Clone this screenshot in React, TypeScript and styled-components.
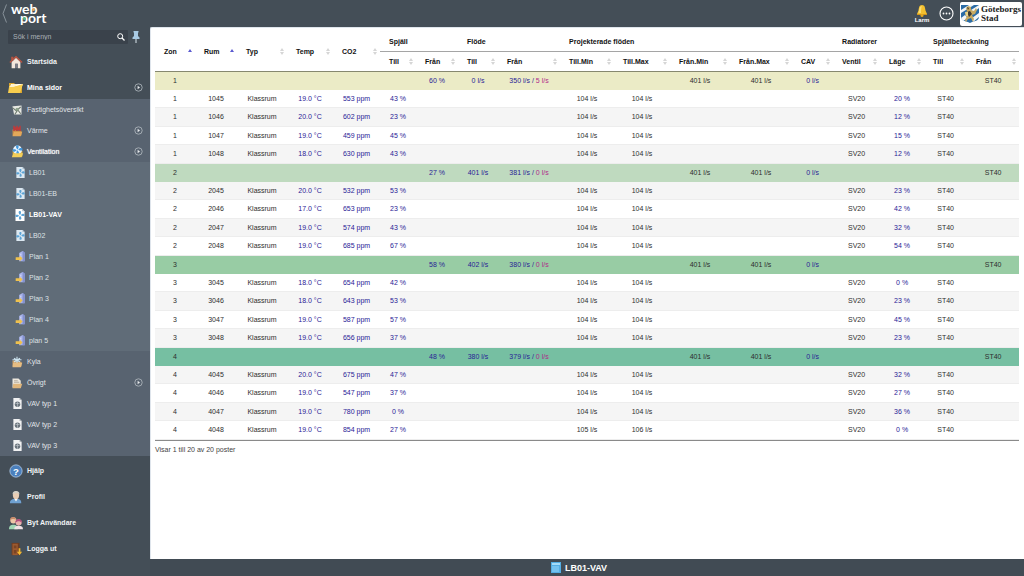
import React from 'react';
import styled, { createGlobalStyle, css } from 'styled-components';

const GlobalStyle = createGlobalStyle`
  *, *::before, *::after { box-sizing: border-box; }
  body {
    margin: 0;
    background: #444e57;
    font: 7px/10px "Liberation Sans", Arial, sans-serif;
    color: #333;
  }
  button { font: inherit; color: inherit; border: 0; background: none; padding: 0; cursor: pointer; }
  a { color: inherit; text-decoration: none; }
  svg { display: block; flex: none; }
`;

/* ---------- Layout ---------- */

const Page = styled.div`
  display: flex;
  min-height: 100vh;
`;

const Sidebar = styled.aside`
  flex: 0 0 150px;
  background: #444e57;
  color: #eef1f3;
`;

const Content = styled.div`
  flex: 1;
  min-width: 0;
  display: flex;
  flex-direction: column;
`;

const TopBar = styled.header`
  height: 27px;
  display: flex;
  align-items: center;
  justify-content: flex-end;
  gap: 8px;
  padding-right: 2px;
  color: #fff;
`;

const Main = styled.main`
  flex: 1;
  background: #fff;
  border: 1px solid #dfe5ec;
  border-width: 1px 0 0 1px;
  border-top-left-radius: 2px;
  padding: 4px 5px 4px 4px;
`;

const StatusBar = styled.footer`
  height: 17px;
  display: flex;
  align-items: center;
  justify-content: center;
  gap: 4px;
  padding-right: 16px;
  background: #414b54;
  color: #fff;
  font-size: 9px;
  font-weight: bold;
`;

/* ---------- Sidebar ---------- */

const Brand = styled.div`
  height: 30px;
  display: flex;
  gap: 4px;
  padding: 4px 0 0 2px;
`;

const BackButton = styled.button`
  align-self: flex-start;
`;

const BrandName = styled.a`
  display: flex;
  flex-direction: column;
  font: 700 14px/9px Lato, sans-serif;
  color: #fff;
`;

const BrandLine = styled.span<{ $indent?: boolean }>`
  position: relative;
  margin-left: ${(p) => (p.$indent ? 9 : 0)}px;
`;

const BrandDot = styled.span<{ $color: string; $left: number }>`
  position: absolute;
  top: 4px;
  left: ${(p) => p.$left}px;
  width: 3px;
  height: 3px;
  border-radius: 50%;
  background: ${(p) => p.$color};
`;

const SearchRow = styled.form`
  display: flex;
  align-items: center;
  gap: 4px;
  padding: 0 8px;
`;

const SearchBox = styled.div`
  flex: 0 0 120px;
  height: 14px;
  display: flex;
  align-items: center;
  padding: 0 3px 0 5px;
  background: #3a424b;
  border-radius: 1px;
`;

const SearchInput = styled.input`
  flex: 1;
  min-width: 0;
  padding: 0;
  border: 0;
  outline: 0;
  background: none;
  font: inherit;
  color: #fff;
  &::placeholder { color: #a9b0b6; opacity: 1; }
`;

const Nav = styled.nav`
  display: flex;
  flex-direction: column;
  gap: 3px;
  padding-top: 6px;
`;

const SubGroup = styled.div`
  background: #586370;
  margin-top: -3px;
`;

const DeepGroup = styled.div`
  background: #606c78;
`;

type Level = 1 | 2 | 3;

const levels = {
  1: css`height: 23px; padding-left: 8px; gap: 3px; font-weight: bold; color: #f1f3f5;`,
  2: css`height: 21px; padding-left: 9px; gap: 2px; color: #e0e4e8;`,
  3: css`height: 21px; padding-left: 12px; gap: 1px; color: #dde1e5;`,
};

const NavLink = styled.a<{ $level: Level; $open?: boolean; $current?: boolean }>`
  display: flex;
  align-items: center;
  padding-right: 7px;
  ${(p) => levels[p.$level]}
  ${(p) => p.$open && css`color: #fff;`}
  ${(p) => p.$open && p.$level === 2 && css`text-shadow: 0 0 1px #fff;`}
  ${(p) => p.$current && css`color: #fff; font-weight: bold;`}
`;

const NavIcon = styled.span`
  width: 16px;
  display: flex;
  justify-content: center;
`;

const NavText = styled.span`
  flex: 1;
`;

/* ---------- Top bar ---------- */

const AlarmButton = styled.button`
  width: 18px;
  display: flex;
  flex-direction: column;
  align-items: center;
  font-size: 6px;
  line-height: 6px;
  font-weight: bold;
`;

const CityLogo = styled.a`
  height: 24px;
  margin-left: -2px;
  display: flex;
  align-items: center;
  gap: 2px;
  padding: 0 1px 0 1px;
  background: #fff;
  border-radius: 2px;
  font: bold 9px/9px "Liberation Serif", serif;
  color: #222;
`;

/* ---------- Table ---------- */

const Table = styled.table`
  width: 100%;
  table-layout: fixed;
  border-collapse: separate;
  border-spacing: 0;
  border-bottom: 1px solid #8a8a8a;
`;

const Col = styled.col<{ $w: number }>`
  width: ${(p) => p.$w}px;
`;

const GroupHead = styled.th`
  height: 20px;
  padding: 0 0 0 9px;
  text-align: left;
  color: #111;
  border-bottom: 1px solid #a5a5a5;
`;

const Head = styled.th`
  height: 20px;
  padding: 0;
  color: #111;
  border-bottom: 1px solid #86886f;
`;

const SortButton = styled.button`
  width: 100%;
  display: flex;
  align-items: center;
  justify-content: space-between;
  padding: 0 3px 0 9px;
  font-weight: bold;
`;

const Cell = styled.td<{ $live?: boolean }>`
  padding: 0;
  text-align: center;
  white-space: nowrap;
  color: ${(p) => (p.$live ? '#2a2296' : '#2e2e2e')};
`;

const Alert = styled.span`
  color: #b02a8a;
`;

const Row = styled.tr<{ $fill?: string }>`
  height: 18px;
  &:nth-child(5n + 3), &:nth-child(5n) { height: 19px; }
  background: ${(p) => p.$fill ?? '#fff'};
  &:nth-child(odd) { background: ${(p) => p.$fill ?? '#f5f5f5'}; }
  ${Cell} { border-bottom: 1px solid ${(p) => p.$fill ?? '#ededed'}; }
`;

const Summary = styled.p`
  margin: 4px 0 0;
  color: #444;
`;

/* ---------- Icons ---------- */

const FOLDER = 'M2 6h4l1 1.5h7V14H2z';

const HomeIcon = () => (
  <svg width="14" height="14" viewBox="0 0 16 16">
    <path d="M3 8v7h4v-5h3v5h3V8L8 3z" fill="#f3e6dc" />
    <path d="M2.500 2h2.500v4H2.500z" fill="#b5533f" />
    <path d="M1 8.500 8 2l7 6.500" stroke="#b95442" strokeWidth="1.600" fill="none" />
    <path d="M7 10h3v5H7z" fill="#7c7c86" />
  </svg>
);
const FolderIcon = () => (
  <svg width="16" height="12" viewBox="0 0 16 12">
    <path d="M1 1h5l1 1h7v9H1z" fill="#dba62d" />
    <path d="M3 2h12l-3 6H2z" fill="#fff" />
    <path d="M1 5c5 0 7-1 14-3l-3 9H0z" fill="#f8ce4e" />
    <path d="M1 5c5 0 7-1 9-3H4z" fill="#fff4cf" />
  </svg>
);
const MapIcon = () => (
  <svg width="12" height="12" viewBox="0 0 16 16">
    <path d="M2 3l12-1v12H4z" fill="#e8e9e4" />
    <path d="M2 5l5 4 6-5M5 14l4-6 4 5" stroke="#6f7b70" strokeWidth="1.500" fill="none" />
    <circle cx="8" cy="7" r="2" fill="#8da28a" />
  </svg>
);
const HeatIcon = () => (
  <svg width="12" height="12" viewBox="0 0 16 16">
    <path d={FOLDER} fill="#c88b48" />
    <path d="M3 1h2v7H3zM7 1h2v7H7zM11 1h2v7h-2zM3 3h10v4H3z" fill="#bd3b3b" />
    <path d="M4 9h11l-2 6H2z" fill="#e3a85a" />
  </svg>
);
const Fan = ({ color }: { color: string }) => (
  <g fill={color}>
    <path d="M8 7C5 4 6 1 9 2c1 2 0 4-1 5zM9 7c3-3 6-2 5 1-2 1-4 0-5-1zM8 8c3 3 2 6-1 5-1-2 0-4 1-5zM7 8C4 11 1 10 2 7c2-1 4 0 5 1z" />
  </g>
);
const VentIcon = () => (
  <svg width="13" height="13" viewBox="0 0 16 16">
    <path d={FOLDER} fill="#d9aa3a" />
    <circle cx="8" cy="6" r="5.500" fill="#e9f5ff" />
    <g transform="translate(0 -1.500)"><Fan color="#4499dd" /></g>
    <path d="M3 10h12l-2 5H1z" fill="#f4cf59" />
  </svg>
);
const FanPageIcon = ({ bright }: { bright?: boolean }) => (
  <svg width={bright ? 12 : 11} height={bright ? 12 : 11} viewBox="0 0 16 16">
    <path d="M2 0h9l3 3v13H2z" fill={bright ? '#fff' : '#dce8f1'} />
    <path d="M11 0v3h3z" fill="#a6b9c8" />
    <g transform="translate(0 1)"><Fan color="#5ba3d6" /></g>
  </svg>
);
const PlanIcon = () => (
  <svg width="11" height="11" viewBox="0 0 16 16">
    <path d="M6 3l5-3 3 2v13H6z" fill="#a9b4ea" />
    <path d="M11 0l3 2v13h-3z" fill="#8491cf" />
    <path d="M8 4h1v2H8zM8 7h1v2H8z" fill="#eef" />
    <path d="M1 9h6V7l4 4-4 4v-2H1z" fill="#efc14d" />
  </svg>
);
const CoolIcon = () => (
  <svg width="12" height="12" viewBox="0 0 16 16">
    <path d={FOLDER} fill="#cda067" />
    <path d="M8 1v9M4 3l8 5M12 3L4 8M2 5h12" stroke="#cbe2ee" strokeWidth="1.500" />
    <path d="M3 9h12l-2 6H2z" fill="#e6bd83" />
  </svg>
);
const MiscIcon = () => (
  <svg width="12" height="12" viewBox="0 0 16 16">
    <path d="M2 2h8l3 3v9H2z" fill="#ece7dd" />
    <path d="M4 5h5M4 7h7" stroke="#a59c8c" />
    <path d="M3 9h12l-2 6H2z" fill="#e0b67c" />
  </svg>
);
const GlobePageIcon = () => (
  <svg width="11" height="11" viewBox="0 0 16 16">
    <path d="M3 0h8l3 3v13H2V0z" fill="#f0f1f2" />
    <path d="M11 0v3h3z" fill="#aab0b5" />
    <circle cx="8" cy="9" r="4" fill="#69737c" />
    <path d="M5 8h6M8 5v8" stroke="#b9c0c6" />
  </svg>
);
const HelpIcon = () => (
  <svg width="14" height="14" viewBox="0 0 16 16">
    <circle cx="8" cy="8" r="7" fill="#4b80bd" stroke="#a9c4e2" />
    <text x="8" y="12" textAnchor="middle" fontSize="11" fontWeight="bold" fill="#fff">?</text>
  </svg>
);
const ProfileIcon = () => (
  <svg width="14" height="14" viewBox="0 0 16 16">
    <path d="M1 15c0-4 3-5 7-5s6 1 6 5z" fill="#6fa1d2" />
    <path d="M6 10l2 3 2-3z" fill="#fff" />
    <ellipse cx="8" cy="6" rx="3.500" ry="4.500" fill="#e8cdb4" />
    <path d="M4 5c0-5 8-5 8 0-2-2-5-2-8 0z" fill="#d3d1c8" />
  </svg>
);
const UsersIcon = () => (
  <svg width="14" height="14" viewBox="0 0 16 16">
    <path d="M0 15c0-4 2-5 5-5s5 1 5 5z" fill="#9fd6b4" />
    <circle cx="5" cy="5" r="3.500" fill="#ecc6a6" />
    <path d="M1 5c0-5 7-5 7-1-2-1-5-1-7 1z" fill="#c98b6a" />
    <path d="M6 15c0-3 2-4 5-4s5 1 5 4z" fill="#f0e2e6" />
    <circle cx="11" cy="7.500" r="3.500" fill="#e7b2ae" />
    <path d="M7 8c0-6 8-6 8 0-2-2-5-3-8 0z" fill="#b34f7c" />
  </svg>
);
const DoorIcon = () => (
  <svg width="14" height="14" viewBox="0 0 16 16">
    <path d="M3 1h9v14H3z" fill="#6e3c20" />
    <path d="M4 2h6v13H4z" fill="#9c5a30" />
    <path d="M5.500 4h3v3h-3zM5.500 9h3v4h-3z" fill="#7a4424" />
    <path d="M11 7h2v4h2l-3 4-3-4h2z" fill="#f3b72f" />
  </svg>
);
const OpenIcon = () => (
  <svg width="9" height="9" viewBox="0 0 9 9">
    <circle cx="4.500" cy="4.500" r="3.700" fill="none" stroke="#b4bbc1" strokeWidth=".8" />
    <path d="M3.600 2.800v3.400L6 4.500z" fill="#e6e9eb" />
  </svg>
);
const BackIcon = () => (
  <svg width="5" height="19" viewBox="0 0 5 19">
    <path d="M4.500 .5L1 9.500l3.500 9" stroke="#88929a" fill="none" />
  </svg>
);
const SearchIcon = () => (
  <svg width="8" height="8" viewBox="0 0 8 8" fill="none" stroke="#fff">
    <circle cx="3.200" cy="3.200" r="2.500" />
    <path d="M5 5l2.500 2.500" strokeWidth="1.300" />
  </svg>
);
const PinIcon = () => (
  <svg width="8" height="12" viewBox="0 0 8 12">
    <path d="M1.500 0h5v1.500H6V5l1.500 1.500V8h-7V6.500L2 5V1.500h-.5z" fill="#a9cbe4" />
    <path d="M4 8v4" stroke="#dbe7ef" />
  </svg>
);
const BellIcon = () => (
  <svg width="12" height="12" viewBox="0 0 12 12">
    <path d="M6 0c3 0 3 3 3.500 5.500L11 9H1l1.500-3.500C3 3 3 0 6 0z" fill="#f4c02e" />
    <path d="M4 2c-1 2-1 4-1.500 6H5c0-3 0-5 1-7z" fill="#fbdd74" />
    <path d="M1 9h10v1H1z" fill="#d3961a" />
    <circle cx="6" cy="10.500" r="1.500" fill="#e5a921" />
  </svg>
);
const MoreIcon = () => (
  <svg width="15" height="15" viewBox="0 0 15 15">
    <circle cx="7.500" cy="7.500" r="6.500" fill="none" stroke="#fff" strokeWidth="1.100" />
    <g fill="#fff"><circle cx="4.500" cy="7.500" r=".9" /><circle cx="7.500" cy="7.500" r=".9" /><circle cx="10.500" cy="7.500" r=".9" /></g>
  </svg>
);
const ShieldIcon = () => (
  <svg width="18" height="20" viewBox="0 0 18 20">
    <path d="M0 1h18v12c0 4-5 4-9 6-4-2-9-2-9-6z" fill="#2b6ca6" />
    <path d="M0 6l8-5h5L0 9zM0 14l4-3 3 3-5 3zM10 6l8-5v3l-6 5zM11 14l7-5v4l-6 5z" fill="#f2f5f7" />
    <path d="M5 4l2-2 3 1v3l3 1 2-3 1 2-2 4-3 1 2 4-1 3-2-4-3 1-2 3-1-2 2-4-2-2 2-3z" fill="#c8a961" />
    <path d="M6 8l3-1 2 3-3 3zM6 3l2 1-1 2z" fill="#3d3a31" />
    <path d="M4 8h3v4H5z" fill="#e8d48c" />
  </svg>
);
const PageIcon = () => (
  <svg width="10" height="11" viewBox="0 0 10 11">
    <path d="M0 0h10v11H0z" fill="#54aee4" />
    <path d="M1 1h8v2H1z" fill="#a5dbf7" />
    <path d="M1 4h7v6H1z" fill="#74c2ef" />
  </svg>
);
const SortIcon = ({ active }: { active?: boolean }) => (
  <svg width="4" height="7" viewBox="0 0 4 7">
    {active ? <path d="M0 4l2-3 2 3z" fill="#5a5ad0" /> : <path d="M0 3l2-3 2 3zM0 4h4L2 7z" fill="#d6d6d6" />}
  </svg>
);

/* ---------- Data ---------- */

interface NavEntry {
  text: string;
  icon: React.ReactNode;
  level: Level;
  expandable?: boolean;
  open?: boolean;
  current?: boolean;
}

const NavItem = ({ text, icon, level, expandable, open, current }: NavEntry) => (
  <NavLink href="#" $level={level} $open={open} $current={current} aria-current={current ? 'page' : undefined}>
    <NavIcon>{icon}</NavIcon>
    <NavText>{text}</NavText>
    {expandable && <OpenIcon />}
  </NavLink>
);

const units: NavEntry[] = [
  { text: 'LB01', icon: <FanPageIcon />, level: 3 },
  { text: 'LB01-EB', icon: <FanPageIcon />, level: 3 },
  { text: 'LB01-VAV', icon: <FanPageIcon bright />, level: 3, current: true },
  { text: 'LB02', icon: <FanPageIcon />, level: 3 },
  ...['Plan 1', 'Plan 2', 'Plan 3', 'Plan 4', 'plan 5'].map((text): NavEntry => ({ text, icon: <PlanIcon />, level: 3 })),
];

const columnWidths = [40, 42, 50, 46, 47, 36, 42, 40, 62, 54, 56, 60, 62, 41, 47, 44, 43, 52];
const leadColumns = ['Zon', 'Rum', 'Typ', 'Temp', 'CO2'];
const groups: [string, number][] = [['Spjäll', 2], ['Flöde', 2], ['Projekterade flöden', 5], ['Radiatorer', 2], ['Spjällbeteckning', 2]];
const subColumns = ['Till', 'Från', 'Till', 'Från', 'Till.Min', 'Till.Max', 'Från.Min', 'Från.Max', 'CAV', 'Ventil', 'Läge', 'Till', 'Från'];

interface Room { id: string; temp: string; co2: number; damper: number; valve: number; min?: number; max?: number }
interface Zone { zone: number; fill: string; damper: number; supply: number; exhaust: number; diff: number; rooms: Room[] }

const zones: Zone[] = [
  { zone: 1, fill: '#ebebc6', damper: 60, supply: 0, exhaust: 350, diff: 5, rooms: [
    { id: '1045', temp: '19.0', co2: 553, damper: 43, valve: 20 },
    { id: '1046', temp: '20.0', co2: 602, damper: 23, valve: 12 },
    { id: '1047', temp: '19.0', co2: 459, damper: 45, valve: 15 },
    { id: '1048', temp: '18.0', co2: 630, damper: 43, valve: 12 } ] },
  { zone: 2, fill: '#bfdabf', damper: 27, supply: 401, exhaust: 381, diff: 0, rooms: [
    { id: '2045', temp: '20.0', co2: 532, damper: 53, valve: 23 },
    { id: '2046', temp: '17.0', co2: 653, damper: 23, valve: 42 },
    { id: '2047', temp: '19.0', co2: 574, damper: 43, valve: 32 },
    { id: '2048', temp: '19.0', co2: 685, damper: 67, valve: 54 } ] },
  { zone: 3, fill: '#98cca4', damper: 58, supply: 402, exhaust: 380, diff: 0, rooms: [
    { id: '3045', temp: '18.0', co2: 654, damper: 42, valve: 0 },
    { id: '3046', temp: '18.0', co2: 643, damper: 53, valve: 23 },
    { id: '3047', temp: '19.0', co2: 587, damper: 57, valve: 45 },
    { id: '3048', temp: '19.0', co2: 656, damper: 37, valve: 23 } ] },
  { zone: 4, fill: '#76bfa2', damper: 48, supply: 380, exhaust: 379, diff: 0, rooms: [
    { id: '4045', temp: '20.0', co2: 675, damper: 47, valve: 32 },
    { id: '4046', temp: '19.0', co2: 547, damper: 37, valve: 27 },
    { id: '4047', temp: '19.0', co2: 780, damper: 0, valve: 36 },
    { id: '4048', temp: '19.0', co2: 854, damper: 27, valve: 0, min: 105, max: 106 } ] },
];

const ZoneRow = ({ z }: { z: Zone }) => (
  <Row $fill={z.fill}>
    <Cell>{z.zone}</Cell>
    <Cell /><Cell /><Cell /><Cell /><Cell />
    <Cell $live>{z.damper} %</Cell>
    <Cell $live>{z.supply} l/s</Cell>
    <Cell $live>{z.exhaust} l/s / <Alert>{z.diff} l/s</Alert></Cell>
    <Cell /><Cell />
    <Cell>401 l/s</Cell>
    <Cell>401 l/s</Cell>
    <Cell $live>0 l/s</Cell>
    <Cell /><Cell /><Cell />
    <Cell>ST40</Cell>
  </Row>
);

const RoomRow = ({ zone, r }: { zone: number; r: Room }) => (
  <Row>
    <Cell>{zone}</Cell>
    <Cell>{r.id}</Cell>
    <Cell>Klassrum</Cell>
    <Cell $live>{r.temp} °C</Cell>
    <Cell $live>{r.co2} ppm</Cell>
    <Cell $live>{r.damper} %</Cell>
    <Cell /><Cell /><Cell />
    <Cell>{r.min ?? 104} l/s</Cell>
    <Cell>{r.max ?? 104} l/s</Cell>
    <Cell /><Cell /><Cell />
    <Cell>SV20</Cell>
    <Cell $live>{r.valve} %</Cell>
    <Cell>ST40</Cell>
    <Cell />
  </Row>
);

export default function App() {
  return (
    <>
      <GlobalStyle />
      <Page>
        <Sidebar>
          <Brand>
            <BackButton type="button" aria-label="Tillbaka"><BackIcon /></BackButton>
            <BrandName href="#">
              <BrandLine>web<BrandDot $color="#e5a860" $left={21} /></BrandLine>
              <BrandLine $indent>port<BrandDot $color="#58b98c" $left={3} /></BrandLine>
            </BrandName>
          </Brand>
          <SearchRow role="search">
            <SearchBox>
              <SearchInput type="text" placeholder="Sök i menyn" aria-label="Sök i menyn" />
              <button type="submit" aria-label="Sök"><SearchIcon /></button>
            </SearchBox>
            <button type="button" aria-label="Fäst menyn"><PinIcon /></button>
          </SearchRow>
          <Nav>
            <NavItem level={1} text="Startsida" icon={<HomeIcon />} />
            <NavItem level={1} text="Mina sidor" icon={<FolderIcon />} expandable open />
            <SubGroup>
              <NavItem level={2} text="Fastighetsöversikt" icon={<MapIcon />} />
              <NavItem level={2} text="Värme" icon={<HeatIcon />} expandable />
              <NavItem level={2} text="Ventilation" icon={<VentIcon />} expandable open />
              <DeepGroup>
                {units.map((u) => <NavItem key={u.text} {...u} />)}
              </DeepGroup>
              <NavItem level={2} text="Kyla" icon={<CoolIcon />} />
              <NavItem level={2} text="Övrigt" icon={<MiscIcon />} expandable />
              <NavItem level={2} text="VAV typ 1" icon={<GlobePageIcon />} />
              <NavItem level={2} text="VAV typ 2" icon={<GlobePageIcon />} />
              <NavItem level={2} text="VAV typ 3" icon={<GlobePageIcon />} />
            </SubGroup>
            <NavItem level={1} text="Hjälp" icon={<HelpIcon />} />
            <NavItem level={1} text="Profil" icon={<ProfileIcon />} />
            <NavItem level={1} text="Byt Användare" icon={<UsersIcon />} />
            <NavItem level={1} text="Logga ut" icon={<DoorIcon />} />
          </Nav>
        </Sidebar>
        <Content>
          <TopBar>
            <AlarmButton type="button"><BellIcon />Larm</AlarmButton>
            <button type="button" aria-label="Mer"><MoreIcon /></button>
            <CityLogo href="#"><ShieldIcon /><span>Göteborgs<br />Stad</span></CityLogo>
          </TopBar>
          <Main>
            <Table>
              <colgroup>{columnWidths.map((w, i) => <Col key={i} $w={w} />)}</colgroup>
              <thead>
                <tr>
                  {leadColumns.map((c, i) => (
                    <Head key={c} rowSpan={2} scope="col">
                      <SortButton type="button">{c}<SortIcon active={i < 2} /></SortButton>
                    </Head>
                  ))}
                  {groups.map(([g, span]) => <GroupHead key={g} colSpan={span} scope="colgroup">{g}</GroupHead>)}
                </tr>
                <tr>
                  {subColumns.map((c, i) => (
                    <Head key={i} scope="col">
                      <SortButton type="button">{c}<SortIcon /></SortButton>
                    </Head>
                  ))}
                </tr>
              </thead>
              <tbody>
                {zones.map((z) => (
                  <React.Fragment key={z.zone}>
                    <ZoneRow z={z} />
                    {z.rooms.map((r) => <RoomRow key={r.id} zone={z.zone} r={r} />)}
                  </React.Fragment>
                ))}
              </tbody>
            </Table>
            <Summary>Visar 1 till 20 av 20 poster</Summary>
          </Main>
          <StatusBar><PageIcon />LB01-VAV</StatusBar>
        </Content>
      </Page>
    </>
  );
}
